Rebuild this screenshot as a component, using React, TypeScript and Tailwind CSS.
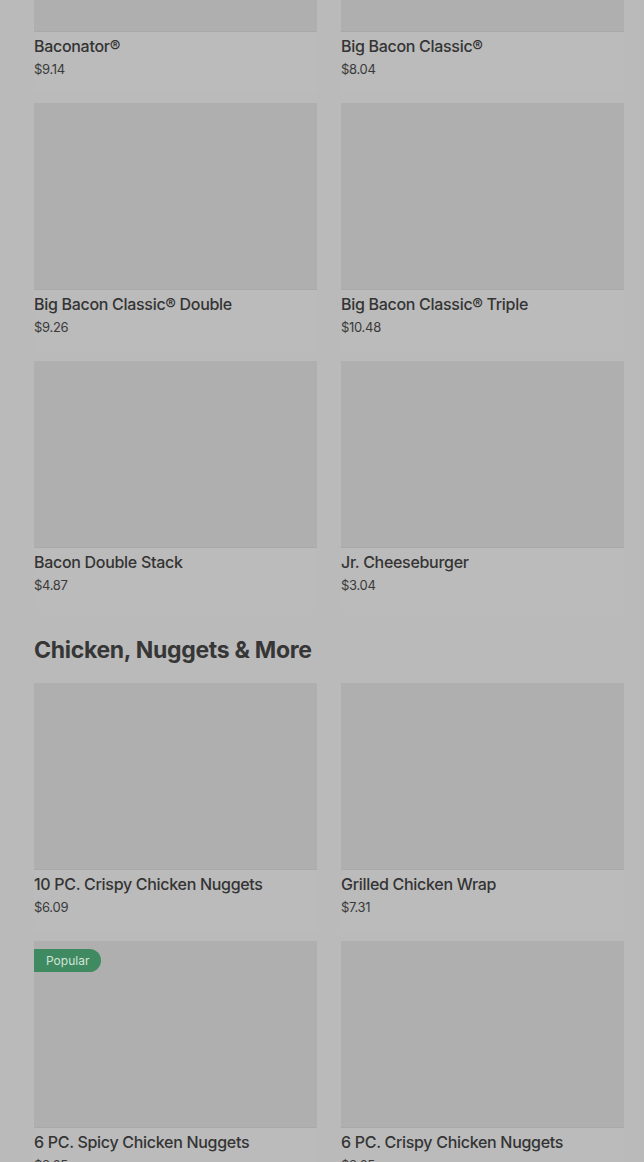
type Item = { name: string; price: string; badge?: string };

const burgers: Item[] = [
  { name: "Baconator®", price: "$9.14" },
  { name: "Big Bacon Classic®", price: "$8.04" },
  { name: "Big Bacon Classic® Double", price: "$9.26" },
  { name: "Big Bacon Classic® Triple", price: "$10.48" },
  { name: "Bacon Double Stack", price: "$4.87" },
  { name: "Jr. Cheeseburger", price: "$3.04" },
];

const chicken: Item[] = [
  { name: "10 PC. Crispy Chicken Nuggets", price: "$6.09" },
  { name: "Grilled Chicken Wrap", price: "$7.31" },
  { name: "6 PC. Spicy Chicken Nuggets", price: "$3.65", badge: "Popular" },
  { name: "6 PC. Crispy Chicken Nuggets", price: "$3.65" },
];

function MenuCard({ item }: { item: Item }) {
  return (
    <div className="flex flex-col bg-[#bbbbbb] pb-[14px]">
      <div className="relative h-[187px] bg-[#afafaf] border-b border-[#a9a9a9]">
        {item.badge && (
          <span className="absolute left-0 top-[8px] h-[23px] pl-[12px] pr-[12px] flex items-center rounded-r-full bg-[#3f8a60] text-[12px] text-[#d3e4d9]">
            {item.badge}
          </span>
        )}
      </div>
      <div className="mt-[4px] text-[16px] leading-[20px] font-medium tracking-[-0.3px] text-[#343434]">{item.name}</div>
      <div className="mt-[3px] text-[13px] leading-[20px] text-[#3a3a3a] tracking-[-0.3px]">{item.price}</div>
    </div>
  );
}

export default function App() {
  return (
    <div className="h-[1162px] overflow-hidden bg-[#bababa] font-['Inter',sans-serif]">
      <div className="-mt-[155px] pl-[34px] pr-[20px]">
        <div className="grid grid-cols-2 gap-x-[24px] gap-y-[10px]">
          {burgers.map((it) => (
            <MenuCard key={it.name} item={it} />
          ))}
        </div>
        <h2 className="pt-[27px] mb-[19px] text-[23px] leading-[28px] font-bold tracking-[-0.3px] text-[#363636]">
          Chicken, Nuggets &amp; More
        </h2>
        <div className="grid grid-cols-2 gap-x-[24px] gap-y-[10px]">
          {chicken.map((it) => (
            <MenuCard key={it.name} item={it} />
          ))}
        </div>
      </div>
    </div>
  );
}
